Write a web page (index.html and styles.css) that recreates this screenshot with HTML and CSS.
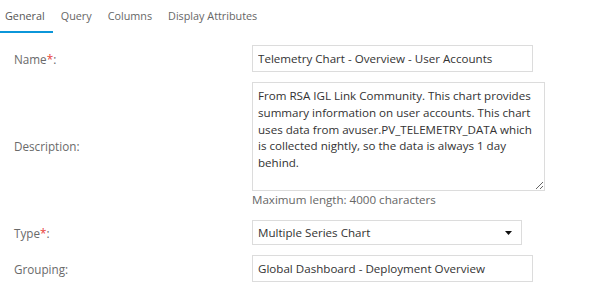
FILE: index.html
```html
<!DOCTYPE html>
<html>
	<head>
		<meta charset="UTF-8" />
		<title>Chart Properties</title>
		<link rel="stylesheet" href="styles.css">
	</head>
	<body>
		<ul class="tabs">
			<li class="tab active">General</li>
			<li class="tab">Query</li>
			<li class="tab">Columns</li>
			<li class="tab">Display Attributes</li>
		</ul>
		<form class="props">
			<label class="field-label">Name<span class="req">*</span>:</label>
			<div class="field">
				<input class="text-input" type="text" value="Telemetry Chart - Overview - User Accounts" />
			</div>

			<label class="field-label">Description:</label>
			<div class="field">
				<textarea class="text-area">From RSA IGL Link Community. This chart provides summary information on user accounts. This chart uses data from avuser.PV_TELEMETRY_DATA which is collected nightly, so the data is always 1 day behind.</textarea>
				<div class="hint">Maximum length: 4000 characters</div>
			</div>

			<label class="field-label">Type<span class="req">*</span>:</label>
			<div class="field">
				<div class="select-box">
					<span>Multiple Series Chart</span>
					<svg class="caret" width="7" height="4" viewBox="0 0 7 4"><path d="M0 0H7L3.5 4Z" fill="#111"/></svg>
				</div>
			</div>

			<label class="field-label">Grouping:</label>
			<div class="field">
				<input class="text-input" type="text" value="Global Dashboard - Deployment Overview" />
			</div>
		</form>
	</body>
</html>
```

FILE: styles.css
```css
* {
	margin: 0;
	padding: 0;
	box-sizing: border-box;
}

body {
	background-color: #fff;
	font-family: "Open Sans", "Liberation Sans", sans-serif;
	font-size: 11.7px;
	color: #333;
}

.tabs {
	list-style: none;
	display: flex;
}

.tab {
	padding: 7px 8px;
	line-height: 17px;
	font-size: 10.8px;
	color: #666;
	border-bottom: 2px solid transparent;
}

.tab:first-child {
	padding-left: 5px;
}

.tab.active {
	color: #555;
	border-bottom-color: #0b96d9;
}

.props {
	display: grid;
	grid-template-columns: 238px 1fr;
	row-gap: 10px;
	align-items: center;
	margin-top: 12px;
	padding-left: 14px;
}

.field-label {
	color: #6a6a6a;
}

.req {
	color: #e8413c;
}

.text-input,
.text-area,
.select-box {
	display: block;
	font-family: inherit;
	font-size: 11.6px;
	color: #333;
	border: 1px solid #dcdcdc;
	background: #fff;
	padding: 0 5px;
}

.text-input {
	width: 281px;
	height: 27px;
}

.text-area {
	width: 293px;
	height: 109px;
	padding: 5px;
	line-height: 16.8px;
	resize: vertical;
}

.hint {
	color: #666;
	font-size: 11.6px;
	line-height: 17px;
	margin-bottom: 2px;
}

.select-box {
	width: 270px;
	height: 25px;
	display: flex;
	align-items: center;
	justify-content: space-between;
	padding-right: 9px;
}

.caret {
	display: block;
}
```
